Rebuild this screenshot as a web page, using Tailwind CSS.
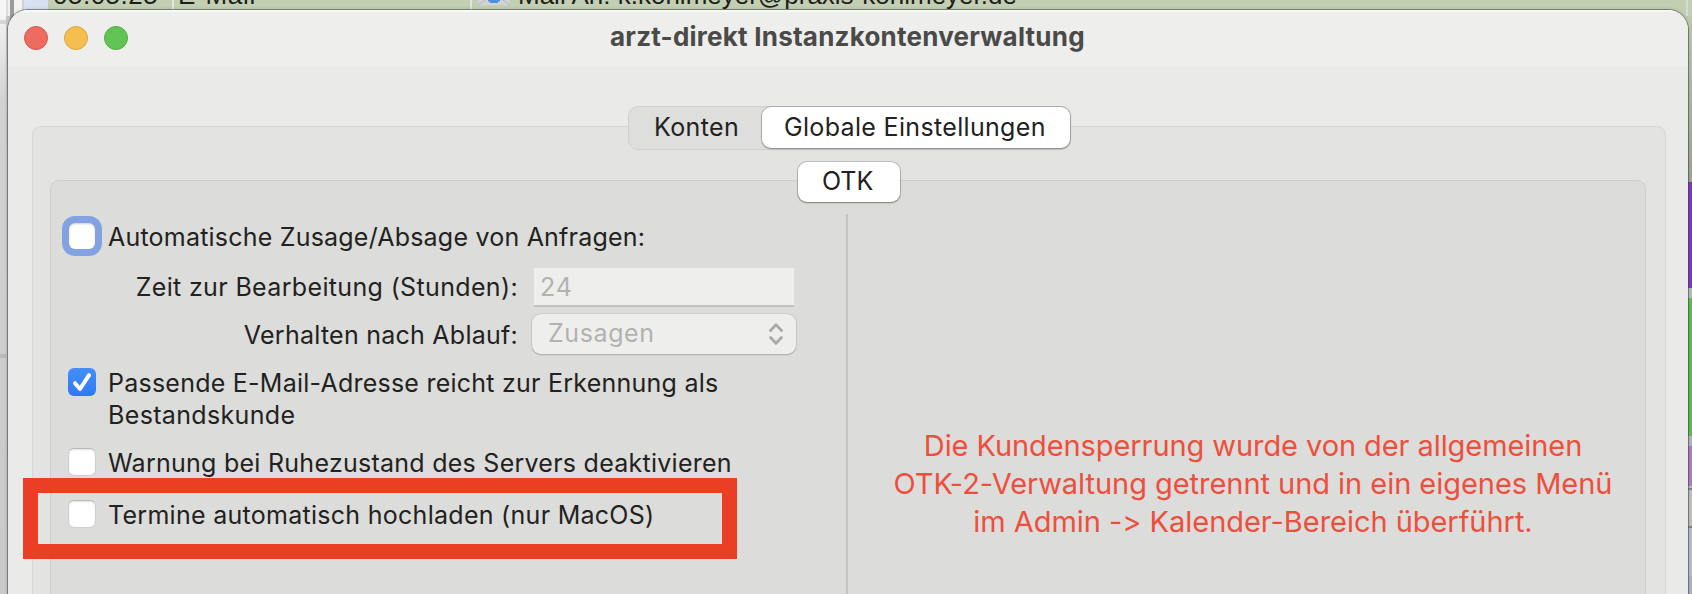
<!DOCTYPE html>
<html lang="de">
<head>
<meta charset="utf-8">
<title>arzt-direkt Instanzkontenverwaltung</title>
<script src="https://cdn.jsdelivr.net/npm/@tailwindcss/browser@4"></script>
</head>
<body class="relative w-[1692px] h-[594px] overflow-hidden bg-[#cfcfcf] font-['Inter',sans-serif] text-[25px] leading-8 text-[#222221]">

<!-- table of the window behind -->
<div class="flex h-[26px] overflow-hidden bg-[#c2cfb2] font-['Liberation_Sans',sans-serif] text-[26px] text-[#1d1f1b]">
  <div class="w-[6px] bg-[#f6f6f6]"></div>
  <div class="w-[2px] bg-[#dcdcdc]"></div>
  <div class="w-[2px] bg-[#f0f0f0]"></div>
  <div class="w-[4px] bg-[#9b9b9b]"></div>
  <div class="w-[8px] bg-[#f2f2f2]"></div>
  <div class="w-[2px] bg-[#d3d3d6]"></div>
  <div class="w-[24px] bg-[#d8e1f2]"></div>
  <div class="w-[124px] pl-[5px] -mt-[21px] whitespace-nowrap tracking-[0.5px]">05.05.25</div>
  <div class="w-[2px] bg-[#e2e4de]"></div>
  <div class="w-[296px] pl-[4px] -mt-[21px] whitespace-nowrap tracking-[0.7px]">E-Mail</div>
  <div class="w-[2px] bg-[#e2e4de]"></div>
  <div class="flex w-[1214px] pl-[6px] gap-[8px]">
    <svg class="w-[32px] h-[5px]" viewBox="0 0 32 5"><path d="M0 0H32V5H0Z" fill="#cfd2d6"/><path d="M0 5L7 0M32 5L25 0" stroke="#b4b8bb" fill="none"/><path d="M10 0H22V1.500H20V3H12V1.500H10Z" fill="#4d8fdc"/></svg>
    <span class="-mt-[21px] whitespace-nowrap">Mail An: k.kohlmeyer@praxis-kohlmeyer.de</span>
  </div>
  <div class="w-[2px] bg-[#d9dad5]"></div>
  <div class="w-[4px]"></div>
</div>

<!-- strips visible on both sides of the dialog -->
<div class="flex justify-between h-[568px] -mt-[10px]">
  <div class="flex flex-col w-[10px] h-[578px] border-r-4 border-[#c6c6c6] bg-linear-to-b from-[#f2f2f2] via-[#d2d2d2] via-15% to-[#c9c9c9]">
    <div class="mt-[4px] h-[4px] bg-[#d4d4d4]"></div>
    <div class="mt-[330px] h-[4px] bg-[#b9b9b9]"></div>
  </div>
  <div class="w-[6px] h-[578px]">
    <div class="h-[166px] bg-linear-to-b from-[#bccaac] to-[#9da893]"></div>
    <div class="h-[106px] bg-[#8137c1]"></div>
    <div class="h-[10px] bg-[#b3bfbe]"></div>
    <div class="h-[138px] bg-[#5cc150]"></div>
    <div class="h-[10px] bg-[#b2b5c8]"></div>
    <div class="h-[40px] bg-[#ad80c6]"></div>
    <div class="h-[2px] bg-[#bfc0cc]"></div>
    <div class="h-[2px] bg-[#8a8a8a]"></div>
    <div class="h-[36px] bg-[#c2bfbf]"></div>
    <div class="h-[2px] bg-[#8a8a8a]"></div>
    <div class="h-[48px] bg-[#b4bfcf]"></div>
    <div class="h-[18px] bg-[#aeb4c6]"></div>
  </div>
</div>

<!-- dialog -->
<div class="absolute left-[8px] top-[10px] w-[1680px] h-[600px] overflow-hidden rounded-t-[20px] bg-[#eaeae8] shadow-[0_0_0_1px_rgba(60,60,60,.5),0_0_4px_rgba(0,0,0,.2)]">
  <div class="flex items-center h-[56px] bg-[#eeeeec] shadow-[inset_0_2px_0_#f8f8f6]">
    <div class="flex gap-4 w-[602px] pl-4">
      <span class="size-6 rounded-full bg-[#ed6b5f] border border-[#d8574c]"></span>
      <span class="size-6 rounded-full bg-[#f5bf4f] border border-[#dba53d]"></span>
      <span class="size-6 rounded-full bg-[#61c454] border border-[#4fae42]"></span>
    </div>
    <h1 class="text-[26px] font-bold tracking-[0.23px] text-[#4a4a48] whitespace-nowrap -mt-[2px]">arzt-direkt Instanzkontenverwaltung</h1>
  </div>

  <div class="mt-[60px] ml-[24px] w-[1634px] h-[500px] rounded-t-[9px] border border-[#d6d6d4] bg-[#e3e3e1]">
    <!-- main tabs -->
    <div class="relative flex w-[443px] h-[44px] -mt-[21px] ml-[595px] rounded-[10px] border border-[#d0d0ce] bg-[#dededc]">
      <div class="w-[133px] pl-[25px] pt-[4px] tracking-[0.4px] whitespace-nowrap">Konten</div>
      <div class="w-[308px] h-[41px] pl-[22px] pt-[4px] rounded-[9px] bg-white shadow-[0_0_0_1px_rgba(0,0,0,.15),0_1px_2px_rgba(0,0,0,.3)] tracking-[0.33px] whitespace-nowrap">Globale Einstellungen</div>
    </div>

    <div class="mt-[30px] ml-[17px] w-[1596px] h-[430px] rounded-t-[9px] border border-[#cfcfcd] bg-[#dcdcda]">
      <!-- sub tab -->
      <div class="relative w-[102px] h-[40px] -mt-[19px] ml-[747px] pl-[24px] pt-[3px] rounded-[9px] bg-white shadow-[0_0_0_1px_rgba(0,0,0,.15),0_1px_2px_rgba(0,0,0,.35)]">OTK</div>

      <div class="flex mt-[12px] h-[390px]">
        <div class="w-[795px] pt-[7px] pl-[17px]">
          <label class="flex gap-[12px] h-8">
            <span class="mt-[2px] mx-px size-[26px] rounded-[6px] bg-white shadow-[0_0_0_7px_#83a2e2,inset_0_1px_2px_rgba(0,0,0,.2)]"></span>
            <span class="tracking-[0.21px] whitespace-nowrap">Automatische Zusage/Absage von Anfragen:</span>
          </label>
          <div class="flex items-center h-8 mt-[18px]">
            <span class="w-[450px] text-right tracking-[0.35px]">Zeit zur Bearbeitung (Stunden):</span>
            <span class="w-[260px] h-[39px] mt-px ml-[16px] pl-[6px] pt-[3px] border-b-2 border-[#c1c1bf] bg-[#eeeeec] text-[#b2b2b1] tracking-[0.8px]">24</span>
          </div>
          <div class="flex items-center h-8 mt-4">
            <span class="w-[450px] text-right tracking-[0.25px]">Verhalten nach Ablauf:</span>
            <span class="flex justify-between w-[264px] h-[40px] -mt-[2px] ml-[14px] pl-4 pr-3 pt-[3px] rounded-[9px] bg-[#eeeeec] text-[#b2b2b1] tracking-[0.6px] shadow-[0_0_0_1px_rgba(0,0,0,.05),0_1px_2px_rgba(0,0,0,.2)]">Zusagen
              <svg class="w-4 h-6 mt-[5px]" viewBox="0 0 16 24" fill="none" stroke="#a9a9a8" stroke-width="2.800" stroke-linecap="round" stroke-linejoin="round"><path d="M2.500 8.500L8 2.800L13.500 8.500M2.500 15.500L8 21.200L13.500 15.500"/></svg>
            </span>
          </div>
          <label class="flex gap-[12px] h-16 mt-4">
            <span class="mt-px size-[28px] rounded-[6px] bg-linear-to-b from-[#4490f8] to-[#2f78f5]">
              <svg class="size-[28px]" viewBox="0 0 28 28" fill="none" stroke="#fff" stroke-width="4" stroke-linecap="round" stroke-linejoin="round"><path d="M7 15.200L12 21L21 7.200"/></svg>
            </span>
            <span class="tracking-[0.24px] whitespace-nowrap">Passende E-Mail-Adresse reicht zur Erkennung als<br><span class="tracking-[0.35px]">Bestandskunde</span></span>
          </label>
          <label class="flex gap-[12px] h-8 mt-4">
            <span class="mt-px size-[28px] rounded-[6px] bg-white border border-[#cfcfcd] border-t-[#b8b8b6] shadow-[inset_0_1px_2px_rgba(0,0,0,.12)]"></span>
            <span class="tracking-[0.26px] whitespace-nowrap">Warnung bei Ruhezustand des Servers deaktivieren</span>
          </label>
          <label class="flex gap-[12px] h-8 mt-5">
            <span class="mt-px size-[28px] rounded-[6px] bg-white border border-[#cfcfcd] border-t-[#b8b8b6] shadow-[inset_0_1px_2px_rgba(0,0,0,.12)]"></span>
            <span class="tracking-[0.28px] whitespace-nowrap">Termine automatisch hochladen (nur MacOS)</span>
          </label>
        </div>
        <div class="w-[2px] bg-[#c4c4c2]"></div>
        <p class="flex-1 pt-[213px] pl-[13px] text-center text-[29px] leading-[38px] text-[#ee4f3c] whitespace-nowrap"><span class="tracking-[-0.08px]">Die Kundensperrung wurde von der allgemeinen</span><br><span class="tracking-[-0.04px]">OTK-2-Verwaltung getrennt und in ein eigenes Menü</span><br><span class="tracking-[-0.04px]">im Admin -&gt; Kalender-Bereich überführt.</span></p>
      </div>
    </div>
  </div>
</div>

<!-- highlight frame -->
<div class="absolute left-[23px] top-[478px] w-[714px] h-[81px] border-[15px] border-[#eb3f25]"></div>
</body>
</html>
